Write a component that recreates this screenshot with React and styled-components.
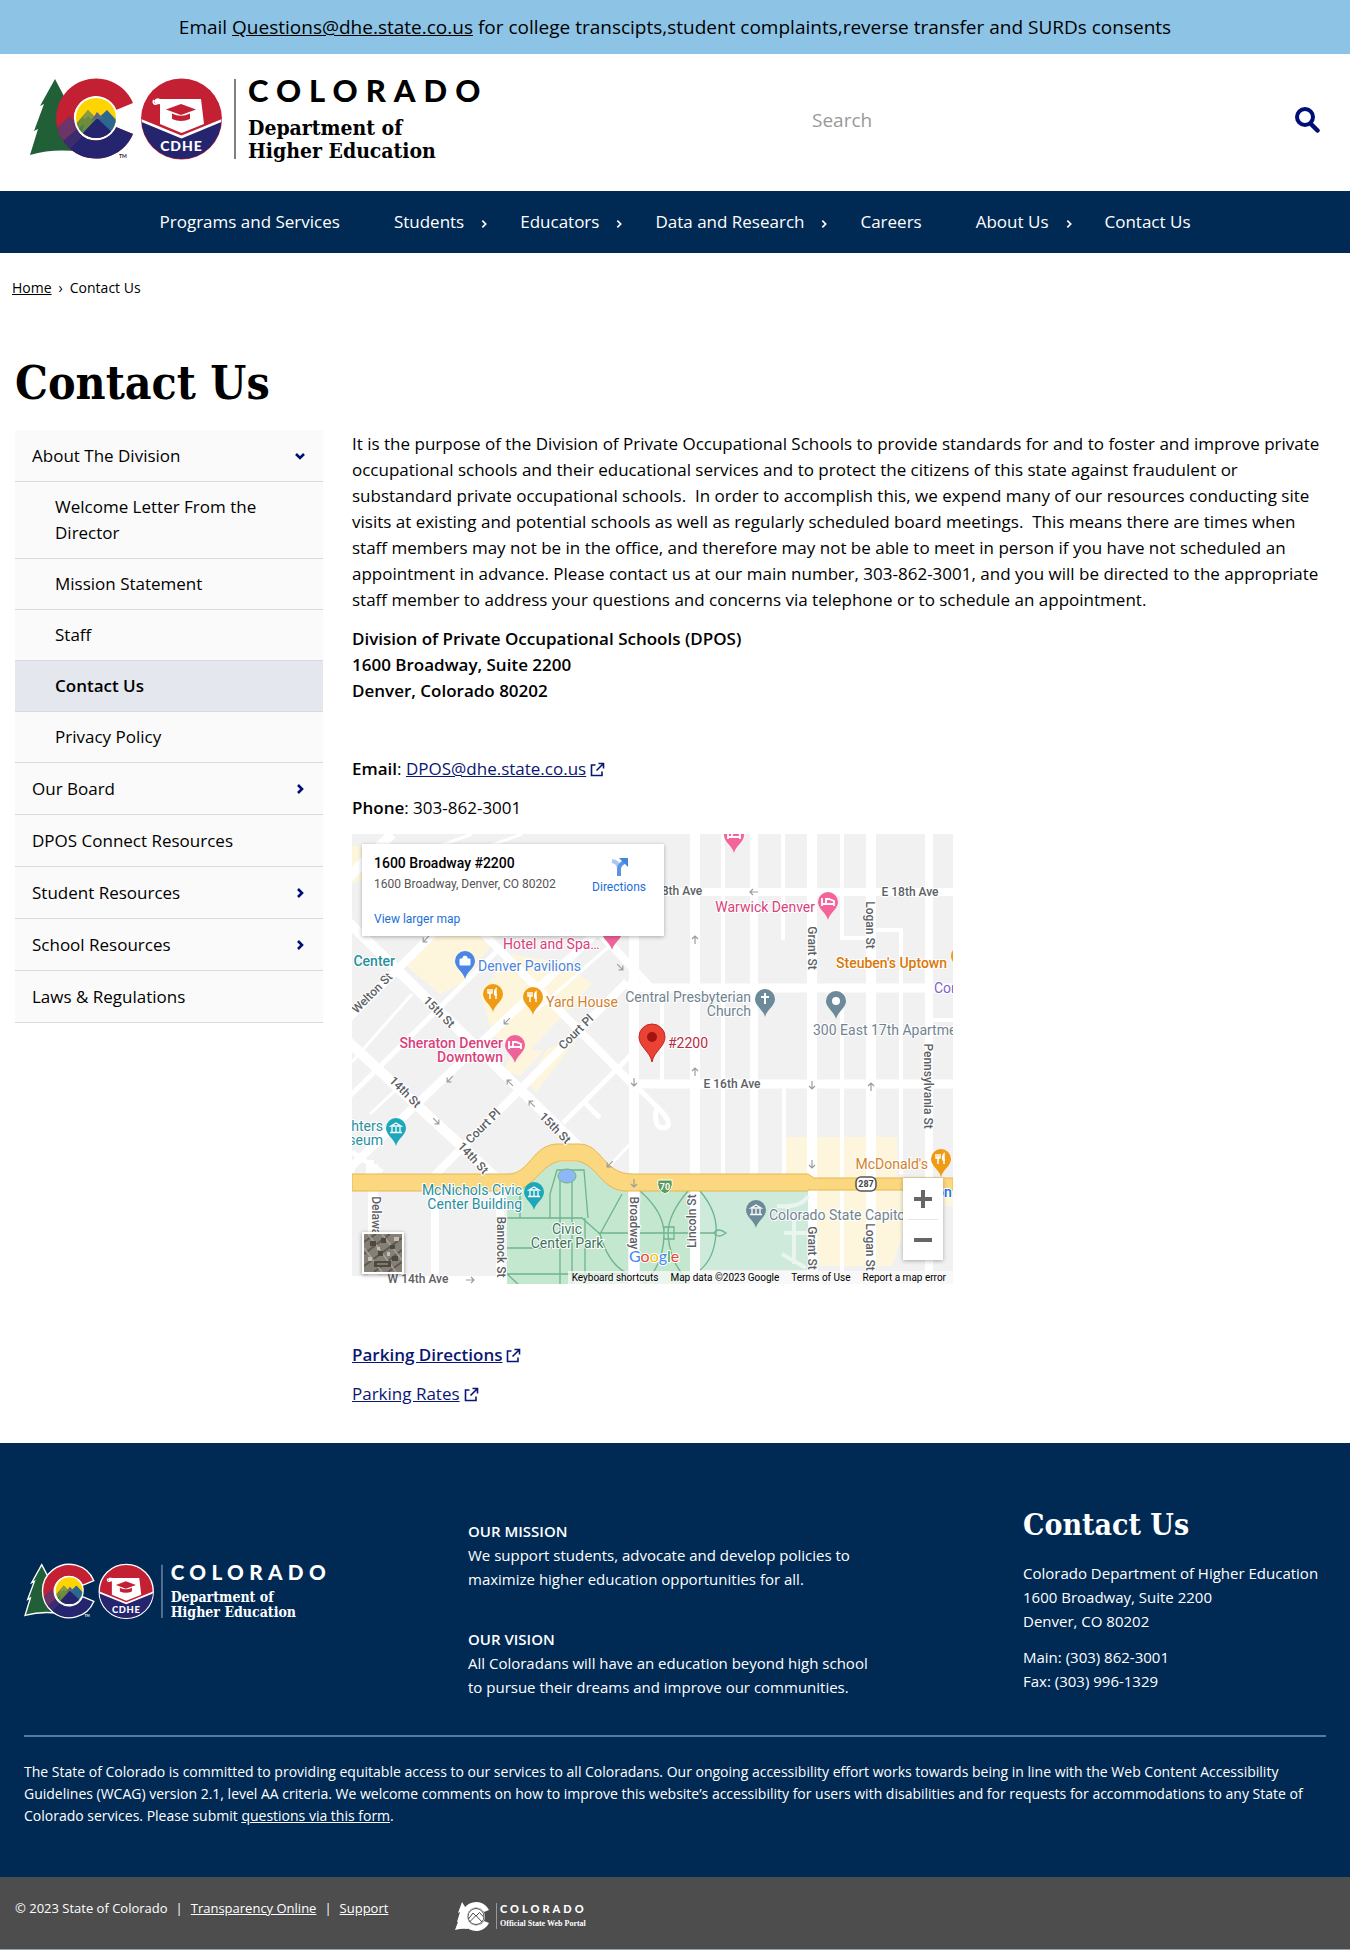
import React from "react";
import styled, { createGlobalStyle, css } from "styled-components";

const BODY = '"Open Sans", "Noto Sans", sans-serif';
const SLAB = '"DejaVu Serif Condensed", "DejaVu Serif", serif';
const NAVY = "#002a54";

const Global = createGlobalStyle`
  * { box-sizing: border-box; }
  body { margin: 0; background: #fff; color: #000; font-family: ${BODY}; font-size: 15px; line-height: 26px; }
  a { color: inherit; }
  p { margin: 0; }
  b { font-weight: 600; }
`;

/* ---------- header ---------- */
const Banner = styled.div`
  background: #8dc4e6;
  padding: 14px 16px;
  text-align: center;
  font-size: 19px;
`;
const Header = styled.header`
  display: grid;
  grid-template-columns: 1fr 1fr;
  align-items: start;
  padding: 24px 30px 27px;
`;
const SearchForm = styled.form`
  display: flex;
  align-items: center;
  padding-top: 18px;
  margin-left: 137px;
`;
const SearchInput = styled.input`
  flex: 1;
  min-width: 0;
  height: 48px;
  padding: 0;
  border: 0;
  background: none;
  font: 19px ${BODY};
  color: #000;
  &::placeholder { color: #999; opacity: 1; }
`;
const IconButton = styled.button`
  display: flex;
  padding: 0;
  border: 0;
  background: none;
  color: #000e78;
  cursor: pointer;
`;
const Nav = styled.nav`
  background: ${NAVY};
  color: #fff;
`;
const NavList = styled.ul`
  display: flex;
  justify-content: center;
  margin: 0;
  padding: 0;
  list-style: none;
`;
const NavItem = styled.li`
  display: flex;
  align-items: center;
  height: 62px;
  padding: 0 ${(p) => (p.$menu ? 4 : 27)}px 0 27px;
`;
const NavLink = styled.a`
  font-size: 17px;
  text-decoration: none;
  white-space: nowrap;
`;
const NavToggle = styled(IconButton)`
  color: #fff;
  padding: 4px 0 0 15px;
`;
const Crumbs = styled.nav`
  display: flex;
  gap: 7px;
  padding: 22px 12px 0;
  font-size: 14px;
`;

/* ---------- main ---------- */
const Title = styled.h1`
  margin: 54px 0 0;
  padding: 0 15px;
  font: bold 46px/56px ${SLAB};
`;
const Columns = styled.div`
  display: grid;
  grid-template-columns: 308px minmax(0, 1fr);
  gap: 29px;
  padding: 19px 24px 36px 15px;
`;
const SideList = styled.ul`
  margin: 0;
  padding: 0;
  list-style: none;
`;
const SideItem = styled.li`
  display: flex;
  justify-content: space-between;
  align-items: center;
  padding: 13px 17px 12px ${(p) => (p.$child ? 40 : 17)}px;
  border-bottom: 1px solid #d9dadb;
  background: #fafafa;
  ${(p) => p.$child && css`padding-top: 12px;`}
  ${(p) => p.$active && css`background: #e4e7ee; font-weight: 600;`}
`;
const SideLink = styled.a`
  font-size: 17px;
  text-decoration: none;
`;
const Article = styled.main`
  display: flex;
  flex-direction: column;
  align-items: flex-start;
  gap: 13px;
  padding-top: 1px;
`;
const Para = styled.p`
  min-height: 26px;
  font-size: 17px;
`;
const ExtLink = styled.a`
  color: #0a1673;
  font-weight: ${(p) => (p.$bold ? 600 : 400)};
  svg { margin-left: 4px; vertical-align: -2px; }
`;

/* ---------- map ---------- */
const MapFrame = styled.section`
  position: relative;
  width: 601px;
  max-width: 100%;
  height: 450px;
  margin-bottom: 6px;
  overflow: hidden;
  font-family: Roboto, sans-serif;
  > svg { display: block; }
`;
const MapCard = styled.div`
  position: absolute;
  left: 10px;
  top: 10px;
  width: 302px;
  height: 92px;
  display: flex;
  justify-content: space-between;
  padding: 8px 18px 0 12px;
  background: #fff;
  box-shadow: 0 1px 4px rgba(0, 0, 0, 0.3);
  font-size: 12px;
  line-height: 20px;
  a { color: #1a6fd6; text-decoration: none; }
`;
const CardTitle = styled.div`
  font-size: 14px;
  font-weight: 500;
  line-height: 22px;
`;
const CardAddress = styled.div`
  margin-bottom: 15px;
  color: #555;
`;
const Directions = styled.a`
  display: flex;
  flex-direction: column;
  align-items: center;
  height: 48px;
  padding-top: 5px;
`;
const ZoomBox = styled.div`
  position: absolute;
  right: 10px;
  bottom: 24px;
  width: 40px;
  display: flex;
  flex-direction: column;
  padding: 0 5px;
  background: #fff;
  box-shadow: 0 1px 4px rgba(0, 0, 0, 0.3);
`;
const ZoomButton = styled.button`
  display: flex;
  align-items: center;
  justify-content: center;
  height: 41px;
  padding: 0;
  border: 0;
  background: none;
  & + & { border-top: 1px solid #e6e6e6; }
`;
const Thumb = styled.button`
  position: absolute;
  left: 10px;
  bottom: 10px;
  padding: 2px;
  border: 0;
  display: flex;
  background: #fff;
  box-shadow: 0 1px 4px rgba(0, 0, 0, 0.4);
`;
const Attribution = styled.div`
  position: absolute;
  right: 0;
  bottom: 0;
  display: flex;
  gap: 12px;
  padding: 0 7px 0 4px;
  background: rgba(248, 250, 248, 0.75);
  font-size: 10px;
  line-height: 13px;
  a { text-decoration: none; }
`;

/* ---------- footer ---------- */
const Footer = styled.footer`
  background: ${NAVY};
  color: #fff;
  padding: 62px 24px 50px;
`;
const FooterTop = styled.div`
  display: grid;
  grid-template-columns: 444px minmax(0, 1fr) 303px;
  padding-bottom: 36px;
  border-bottom: 2px solid #5a7ba0;
  line-height: 24px;
`;
const FooterLogo = styled.div`
  padding: 59px 0 0 1px;
`;
const Mission = styled.div`
  display: flex;
  flex-direction: column;
  gap: 36px;
  padding-top: 14px;
`;
const Contact = styled.address`
  display: flex;
  flex-direction: column;
  gap: 12px;
  font-style: normal;
  white-space: nowrap;
`;
const FooterHeading = styled.h2`
  margin: 0 0 4px;
  font: bold 30px/40px ${SLAB};
`;
const Legal = styled.p`
  padding-top: 24px;
  font-size: 14px;
  line-height: 22px;
`;
const BottomBar = styled.div`
  display: flex;
  align-items: flex-start;
  gap: 66px;
  height: 73px;
  padding: 18px 15px;
  background: #4d4d4d;
  border-bottom: 1px solid #8aa4b5;
  color: #fff;
  font-size: 13px;
`;
const BarLinks = styled.div`
  display: flex;
  gap: 8px;
`;
const PortalLink = styled.a`
  padding-top: 6px;
`;

/* ---------- drawings ---------- */
const LogoSvg = styled.svg`
  display: block;
  overflow: visible;
`;

const C_SHAPE = "M133 103A40 40 0 1 0 133 134L116 127A22 22 0 1 1 116 110Z";

const BrandMark = ({ light }) => {
  const edge = light ? "#fff" : "none";
  const id = light ? "mark-light" : "mark-dark";
  return (
    <g>
      <defs>
        <clipPath id={`${id}-c`}><path d={C_SHAPE} /></clipPath>
        <clipPath id={`${id}-sun`}><circle cx="96" cy="118" r="20" /></clipPath>
        <clipPath id={`${id}-cap`}><circle cx="181.5" cy="119" r="40" /></clipPath>
      </defs>
      <path
        d="M55 79L66 100L62 99L78 125L80 152Q55 148 30 155L38 129L34 131L44 104L40 106Z"
        fill="#215f36" stroke={edge} strokeWidth="2"
      />
      <path d={C_SHAPE} fill="#c42034" />
      <g clipPath={`url(#${id}-c)`}>
        <path d="M54 142L76 118L96 140L120 116L136 116V162H70Z" fill="#25256f" />
        <path d="M52 132L70 116L84 134L66 152Z" fill="#6c3468" />
        <path d="M62 142L78 128L84 134L68 150Z" fill="#3b2c6e" />
      </g>
      {light && <path d={C_SHAPE} fill="none" stroke="#fff" strokeWidth="2" />}
      <circle cx="96" cy="118" r="22" fill="#fff" />
      <g clipPath={`url(#${id}-sun)`}>
        <rect x="74" y="96" width="44" height="44" fill="#ffd400" />
        <path d="M74 126L88 110L104 126V140H74Z" fill="#6f8b3c" />
        <path d="M92 124L107 110L120 124V140H92Z" fill="#2c6791" />
        <path d="M82 117L88 110L94 117L91 119L88 116L85 119Z" fill="#8a9a45" />
        <path d="M74 140L80 136L97 118L118 138V142Z" fill="#25256f" />
        <path d="M74 132L84 124L80 140Z" fill="#40804a" />
        <path d="M97 112L104 119L97 118L91 121Z" fill="#57658c" />
      </g>
      <circle cx="181.5" cy="119" r="40.5" fill="#c42034" stroke={edge} strokeWidth="2" />
      <g clipPath={`url(#${id}-cap)`}>
        <path d="M140 120L181.5 137L223 120V162H140Z" fill="#25256f" stroke="#fff" strokeWidth="2.6" />
      </g>
      <path d="M160 99H201L204 124L181.5 133L160 124V104Q155 105 154 101Q156 97 160 99Z" fill="#fff" />
      <path d="M154 100a2.400 2.400 0 1 0 4 2" fill="none" stroke="#fff" strokeWidth="1.600" />
      <path d="M166 109.500L181 104L196 109.500L181 115Z" fill="#c42034" />
      <path d="M172 113.500Q181 118 190 113.500V119Q181 123 172 119Z" fill="#c42034" />
      <text x="181.500" y="151" textAnchor="middle" fontFamily="Lato" fontWeight="900" fontSize="14" letterSpacing="1" fill="#fff">CDHE</text>
      <text x="119" y="158" fontFamily="Lato" fontWeight="700" fontSize="5" fill={light ? "#fff" : "#222"}>TM</text>
    </g>
  );
};

const BrandLogo = ({ width, light }) => {
  const ink = light ? "#fff" : "#000";
  return (
    <LogoSvg width={width} viewBox="30 78 455 86" role="img" aria-label="Colorado Department of Higher Education">
      <BrandMark light={light} />
      <path d="M235 79V159" stroke={light ? "#9fb0c4" : "#555"} strokeWidth="1.500" />
      <text x="248" y="102" fontFamily="Lato" fontWeight="900" fontSize="31" letterSpacing="8" fill={ink}>COLORADO</text>
      <g fontFamily="DejaVu Serif Condensed, DejaVu Serif" fontWeight="700" fontSize="21" fill={ink}>
        <text x="248" y="135">Department of</text>
        <text x="248" y="158">Higher Education</text>
      </g>
    </LogoSvg>
  );
};

const PortalLogo = () => (
  <LogoSvg width="138" height="32" viewBox="0 0 138 32" role="img" aria-label="Colorado Official State Web Portal">
    <path d="M8 1L13 9L14 28Q8 27 1 29L4 21L3 21L6 11L4 12Z" fill="#fff" />
    <path d="M35 9A14.500 14.500 0 1 0 35 22L30 20A9 9 0 1 1 30 11Z" fill="#fff" />
    <circle cx="22" cy="15.500" r="9" fill="#fff" />
    <circle cx="22" cy="15.500" r="8" fill="none" stroke="#4d4d4d" />
    <path d="M14.500 18L19 12L22 15L25.500 11.500L29.500 16M15.500 21L22 14.500L28 21" fill="none" stroke="#4d4d4d" />
    <path d="M42.500 2V28" stroke="#999" />
    <text x="46" y="12" fontFamily="Lato" fontWeight="900" fontSize="11" letterSpacing="3" fill="#fff">COLORADO</text>
    <text x="46" y="25" fontFamily="Liberation Serif" fontWeight="700" fontSize="8" fill="#fff">Official State Web Portal</text>
  </LogoSvg>
);

const Chevron = ({ down, size = 12, weight = 2 }) => (
  <svg width={size} height={size} viewBox="0 0 12 12" fill="none" stroke="currentColor" strokeWidth={weight}>
    <path d={down ? "M2 4L6 8L10 4" : "M4 2L8 6L4 10"} />
  </svg>
);

const ExternalIcon = () => (
  <svg width="15" height="15" viewBox="0 0 15 15" fill="none" stroke="#0a1673" strokeWidth="1.600">
    <path d="M5.500 3H1.500V13.500H12V9.500M8.500 1.500H13.500V6.500M13 2L6.500 8.500" />
  </svg>
);

const PIN = "M0 18C-1.500 11 -10 7 -10 0A10 10 0 1 1 10 0C10 7 1.500 11 0 18Z";
const GLYPHS = {
  bed: <path d="M-6 -4V4M-6 2H6V-1L1 -3H-2V2M6 2V4" fill="none" stroke="#fff" strokeWidth="1.800" />,
  food: <path d="M-3 -5V5M-5 -5V-1H-1V-5M3 5V-5Q1 -3 2 1H4" fill="none" stroke="#fff" strokeWidth="1.500" />,
  bag: <path d="M-5 -2H5V4H-5ZM-2 -2V-4Q0 -6 2 -4V-2" fill="#fff" stroke="#fff" />,
  cross: <path d="M0 -6V5M-4 -2H4" stroke="#fff" strokeWidth="2" />,
  dot: <circle r="4" fill="#fff" />,
  hall: <path d="M-5 -2L0 -5L5 -2ZM-4 -1V4M0 -1V4M4 -1V4M-6 4.500H6" fill="none" stroke="#fff" strokeWidth="1.300" />,
};
const PINS = [
  [260, 98, "#f0639a", "bed"], [382, 1, "#f4639a", "bed"], [476, 68, "#f4639a", "bed"],
  [163, 211, "#f0639a", "bed"], [113, 127, "#4a86e8", "bag"], [141, 160, "#ef9b13", "food"],
  [181, 163, "#ef9b13", "food"], [589, 325, "#ef9b13", "food"], [609, 122, "#ef9b13", "dot"],
  [413, 165, "#6c8a99", "cross"], [484, 167, "#6c8a99", "dot"], [404, 376, "#6c8a99", "hall"],
  [44, 294, "#1ca7bb", "hall"], [182, 358, "#1ca7bb", "hall"],
];
const PINK = "#d9417c", TEAL = "#28909e", SLATE = "#71838f", ORANGE = "#d3822c";
const PLACES = [
  [43, 132, "Center", TEAL, "end", 500], [151, 115, "Hotel and Spa…", PINK],
  [126, 137, "Denver Pavilions", "#4d86d9"], [194, 173, "Yard House", ORANGE],
  [399, 168, "Central Presbyterian", SLATE, "end"], [399, 182, "Church", SLATE, "end"],
  [151, 214, "Sheraton Denver", PINK, "end", 500], [151, 228, "Downtown", PINK, "end", 500],
  [316, 214, "#2200", "#b92a44"], [463, 78, "Warwick Denver", PINK, "end"],
  [484, 134, "Steuben's Uptown", "#d97706", "start", 500], [582, 159, "Cor", "#7a5fd0"],
  [461, 201, "300 East 17th Apartment", SLATE], [31, 297, "hters", TEAL, "end"],
  [31, 311, "seum", TEAL, "end"], [170, 361, "McNichols Civic", TEAL, "end"],
  [170, 375, "Center Building", TEAL, "end"], [215, 400, "Civic", "#3d7459", "middle"],
  [215, 414, "Center Park", "#3d7459", "middle"], [417, 386, "Colorado State Capitol", SLATE],
  [576, 335, "McDonald's", ORANGE, "end"], [584, 363, "on", "#1a73e8", "start", 500],
];
const STREETS = [
  [330, 57, 0, "8th Ave"], [558, 58, 0, "E 18th Ave"], [380, 250, 0, "E 16th Ave"],
  [66, 445, 0, "W 14th Ave"], [460, 114, 90, "Grant St"], [518, 91, 90, "Logan St"],
  [576, 252, 90, "Pennsylvania St"], [460, 414, 90, "Grant St"], [518, 413, 90, "Logan St"],
  [282, 389, 90, "Broadway"], [340, 387, -90, "Lincoln St"], [149, 413, 90, "Bannock St"],
  [24, 387, 90, "Delaware"], [53, 258, 45, "14th St"], [121, 324, 47, "14th St"],
  [203, 294, 45, "15th St"], [87, 178, 45, "15th St"], [131, 292, -45, "Court Pl"],
  [224, 198, -45, "Court Pl"], [20, 159, -45, "Welton St"],
];
const ARROWS = [
  [402, 58, 180], [343, 106, -90], [343, 238, -90], [282, 248, 90], [460, 251, 90],
  [519, 253, -90], [460, 330, 90], [98, 245, 135], [84, 287, 45], [158, 249, -135],
  [180, 270, -135], [155, 187, 135], [118, 446, 0], [282, 349, 90], [258, 330, 135],
  [74, 105, 135], [268, 133, 45],
];

const MapDrawing = () => (
  <svg width="601" height="450" viewBox="0 0 601 450" role="img" aria-label="Street map of central Denver">
    <rect width="601" height="450" fill="#f1f1f2" />
    <g fill="#fdf6dc">
      <path d="M70 108L90 96H150L112 148L88 160L50 128Z" />
      <path d="M128 158L160 120L215 130L240 150L170 225L140 200Z" />
      <path d="M163 216L192 216L168 242L152 236Z" />
      <path d="M195 215L225 205L184 258L176 248Z" />
      <path d="M0 12H75L0 50Z" />
      <path d="M433 303H545V345H433Z" />
      <path d="M464 356H601V372H551V400L540 432H464Z" />
    </g>
    <g stroke="#fff" fill="none">
      <path strokeWidth="10" d="M343 0V450M460 0V450M519 0V450M282 90V450M21 330V450" />
      <path strokeWidth="8" d="M402 0V345M577 0V450M83 350V440M148 350V450M310 58H601M0 446H160" />
      <path strokeWidth="9" d="M275 150Q285 154 300 154H601M280 250H601" />
      <path strokeWidth="4" d="M371 0V345M431 0V106M432 250V345M490 0V104H516M490 154V345M519 96H549V340M490 356V450M371 154V345M577 186H601M310 154V250" />
      <path strokeWidth="10" d="M-10 82L228 314M-12 200L145 345M40 0L-10 50" />
      <path strokeWidth="8" d="M-5 186L95 86M-5 348L0 332L245 98M80 344L275 148M120 88L282 252M235 85L300 155M18 326V345" />
      <path strokeWidth="5" d="M-2 262L150 112M211 289L282 218M0 318L30 338M282 250L310 278Q322 292 312 294Q300 294 305 272M232 268L248 284" />
      <path strokeWidth="3" d="M0 228L60 160M18 280L48 252M250 340L282 306M180 180L262 108M60 22L120 0M100 26L170 0" />
    </g>
    <path d="M155 357L200 328H232L272 357H276V450H155Z" fill="#c3e7cf" />
    <path d="M288 357H338V450H288Z" fill="#c3e7cf" />
    <path d="M348 357H456V436H348Z" fill="#cdeadb" />
    <g stroke="#6fb48d" strokeWidth="1.300" fill="none">
      <path d="M155 384H230L248 400L270 360M155 414H200M233 384V440M198 384V360L205 336H232L236 384M208 346V450M220 346V450M168 384V358M248 400Q256 430 276 440M246 399H276M155 440L166 450M155 440H276" />
      <path d="M288 357Q312 378 312 400Q312 430 292 450M336 357Q316 380 316 400Q318 430 336 446M288 399H338M348 357Q366 378 364 400Q362 425 348 436M312 393H322V405H312ZM348 399H362Q366 393 374 399Q366 405 362 399" />
    </g>
    <path d="M425 372Q450 374 456 362M442 380V430M430 420L454 434M432 399H456" stroke="#e9f5ee" strokeWidth="4" fill="none" />
    <path d="M0 340H156C178 340 180 311 205 310H228C250 311 252 340 280 340H456L462 344H601V356H456V357H274C250 357 245 330 225 327H208C188 330 182 357 158 357H0Z" fill="#fbd77f" stroke="#e6b84e" />
    <ellipse cx="215" cy="342" rx="9" ry="7" fill="#8db8f5" stroke="#6fb48d" />
    <g fill="none" stroke="#9a9da0" strokeWidth="1.200">
      {ARROWS.map(([x, y, r]) => (
        <path key={`${x}-${y}`} d="M-4 0H4M1 -3L4 0L1 3" transform={`translate(${x} ${y}) rotate(${r})`} />
      ))}
    </g>
    <g fontFamily="Roboto" fontSize="12" fontWeight="500" fill="#5c6064" textAnchor="middle" stroke="#fff" strokeWidth="2" paintOrder="stroke">
      {STREETS.map(([x, y, r, label]) => (
        <text key={`${x}-${y}`} transform={`translate(${x} ${y}) rotate(${r})`} y="4">{label}</text>
      ))}
    </g>
    <g fontFamily="Roboto" fontSize="14" stroke="#fff" strokeWidth="2" paintOrder="stroke">
      {PLACES.map(([x, y, label, color, anchor = "start", weight = 400]) => (
        <text key={`${x}-${y}`} x={x} y={y} fill={color} textAnchor={anchor} fontWeight={weight}>{label}</text>
      ))}
    </g>
    {PINS.map(([x, y, color, glyph]) => (
      <g key={`${x}-${y}`} transform={`translate(${x} ${y})`}>
        <path d={PIN} fill={color} />
        {GLYPHS[glyph]}
      </g>
    ))}
    <g transform="translate(300 203)">
      <path d="M0 25C-2 14 -13 10 -13 0A13 13 0 1 1 13 0C13 10 2 14 0 25Z" fill="#ea4335" stroke="#c5221f" />
      <circle r="5" fill="#a3140f" />
    </g>
    <rect x="504" y="343" width="20" height="14" rx="5" fill="#fff" stroke="#555" strokeWidth="1.500" />
    <path d="M306 346H320Q322 356 313 360Q304 356 306 346Z" fill="#5a9a5c" stroke="#fff" />
    <g fontFamily="Roboto" fontSize="9" fontWeight="700" textAnchor="middle">
      <text x="514" y="353" fill="#444">287</text>
      <text x="313" y="356" fill="#fff">70</text>
    </g>
    <text x="277" y="428" fontFamily="Lato" fontSize="16" stroke="#fff" strokeWidth="2" paintOrder="stroke">
      <tspan fill="#4285f4">G</tspan><tspan fill="#ea4335">o</tspan><tspan fill="#fbbc04">o</tspan><tspan fill="#4285f4">g</tspan><tspan fill="#34a853">l</tspan><tspan fill="#ea4335">e</tspan>
    </text>
  </svg>
);

const SatelliteThumb = () => (
  <svg width="38" height="38" viewBox="0 0 38 38" aria-hidden="true">
    <rect width="38" height="38" fill="#857f76" />
    <path d="M0 8L12 0M0 20L26 0M0 32L38 4M10 38L38 16M24 38L38 28" stroke="#5f5a54" strokeWidth="2" />
    <path d="M4 0L32 38M18 0L38 26M0 14L18 38" stroke="#a8a196" strokeWidth="1.500" />
    <path d="M6 7H12V12H6ZM17 4H22V9H17ZM26 11H31V15H26ZM10 27H27V33H10ZM14 17H19V22H14ZM28 22H34V27H28Z" fill="#4c4843" />
    <path d="M13 13H16V16H13ZM23 18H26V22H23ZM4 23H8V27H4ZM30 3H35V7H30Z" fill="#c4bdb0" />
    <path d="M13 29H24V31H13Z" fill="#75805e" />
  </svg>
);

/* ---------- data ---------- */
const NAV = [
  ["Programs and Services"], ["Students", true], ["Educators", true], ["Data and Research", true],
  ["Careers"], ["About Us", true], ["Contact Us"],
];
const SIDE = [
  { label: "About The Division", icon: "down" },
  { label: "Welcome Letter From the Director", child: true },
  { label: "Mission Statement", child: true },
  { label: "Staff", child: true },
  { label: "Contact Us", child: true, active: true },
  { label: "Privacy Policy", child: true },
  { label: "Our Board", icon: "right" },
  { label: "DPOS Connect Resources" },
  { label: "Student Resources", icon: "right" },
  { label: "School Resources", icon: "right" },
  { label: "Laws & Regulations" },
];

export default function App() {
  return (
    <>
      <Global />
      <Banner>
        Email <a href="#email">Questions@dhe.state.co.us</a> for college transcipts,student complaints,reverse transfer and SURDs consents
      </Banner>
      <Header>
        <BrandLogo width={455} />
        <SearchForm role="search">
          <SearchInput type="search" placeholder="Search" aria-label="Search" />
          <IconButton type="button" aria-label="Submit search">
            <svg width="25" height="26" viewBox="0 0 25 26" fill="none" stroke="currentColor" strokeLinecap="round">
              <circle cx="10" cy="10" r="8" strokeWidth="4" />
              <path d="M16 17L22.500 23.500" strokeWidth="4.500" />
            </svg>
          </IconButton>
        </SearchForm>
      </Header>
      <Nav aria-label="Main">
        <NavList>
          {NAV.map(([label, menu]) => (
            <NavItem key={label} $menu={menu}>
              <NavLink href="#nav">{label}</NavLink>
              {menu && <NavToggle type="button" aria-label={`${label} menu`}><Chevron size={10} weight={2} /></NavToggle>}
            </NavItem>
          ))}
        </NavList>
      </Nav>
      <Crumbs aria-label="Breadcrumb">
        <a href="#home">Home</a><span>›</span><span>Contact Us</span>
      </Crumbs>
      <Title>Contact Us</Title>
      <Columns>
        <SideList>
          {SIDE.map((item) => (
            <SideItem key={item.label} $child={item.child} $active={item.active}>
              <SideLink href="#section">{item.label}</SideLink>
              {item.icon && (
                <IconButton type="button" aria-label={`Toggle ${item.label}`}>
                  <Chevron down={item.icon === "down"} weight={2.6} />
                </IconButton>
              )}
            </SideItem>
          ))}
        </SideList>
        <Article>
          <Para>
            It is the purpose of the Division of Private Occupational Schools to provide standards for and to foster and improve private occupational schools and their educational services and to protect the citizens of this state against fraudulent or substandard private occupational schools.&nbsp; In order to accomplish this, we expend many of our resources conducting site visits at existing and potential schools as well as regularly scheduled board meetings.&nbsp; This means there are times when staff members may not be in the office, and therefore may not be able to meet in person if you have not scheduled an appointment in advance. Please contact us at our main number, 303-862-3001, and you will be directed to the appropriate staff member to address your questions and concerns via telephone or to schedule an appointment.
          </Para>
          <Para>
            <b>Division of Private Occupational Schools (DPOS)<br />1600 Broadway, Suite 2200<br />Denver, Colorado 80202</b>
          </Para>
          <Para />
          <Para><b>Email</b>: <ExtLink href="#dpos">DPOS@dhe.state.co.us<ExternalIcon /></ExtLink></Para>
          <Para><b>Phone</b>: 303-862-3001</Para>
          <MapFrame aria-label="Map">
            <MapDrawing />
            <MapCard>
              <div>
                <CardTitle>1600 Broadway #2200</CardTitle>
                <CardAddress>1600 Broadway, Denver, CO 80202</CardAddress>
                <a href="#map">View larger map</a>
              </div>
              <Directions href="#directions">
                <svg width="18" height="20" viewBox="0 0 18 20" fill="none">
                  <path d="M2 4Q9 5 9 12V19" stroke="#a9c9f5" strokeWidth="4" />
                  <path d="M9 19V12Q9 8 14 5" stroke="#5b94e3" strokeWidth="4" />
                  <path d="M9 1H18V10Z" fill="#4285dc" />
                </svg>
                Directions
              </Directions>
            </MapCard>
            <Thumb type="button" aria-label="Show satellite imagery"><SatelliteThumb /></Thumb>
            <ZoomBox>
              <ZoomButton type="button" aria-label="Zoom in">
                <svg width="18" height="18"><path d="M0 9H18M9 0V18" stroke="#666" strokeWidth="4" /></svg>
              </ZoomButton>
              <ZoomButton type="button" aria-label="Zoom out">
                <svg width="18" height="18"><path d="M0 9H18" stroke="#666" strokeWidth="4" /></svg>
              </ZoomButton>
            </ZoomBox>
            <Attribution>
              <a href="#keys">Keyboard shortcuts</a>
              <span>Map data ©2023 Google</span>
              <a href="#terms">Terms of Use</a>
              <a href="#report">Report a map error</a>
            </Attribution>
          </MapFrame>
          <Para />
          <Para><ExtLink href="#parking" $bold>Parking Directions<ExternalIcon /></ExtLink></Para>
          <Para><ExtLink href="#rates">Parking Rates<ExternalIcon /></ExtLink></Para>
        </Article>
      </Columns>
      <Footer>
        <FooterTop>
          <FooterLogo><BrandLogo width={304} light /></FooterLogo>
          <Mission>
            <p><b>OUR MISSION</b><br />We support students, advocate and develop policies to<br />maximize higher education opportunities for all.</p>
            <p><b>OUR VISION</b><br />All Coloradans will have an education beyond high school<br />to pursue their dreams and improve our communities.</p>
          </Mission>
          <Contact>
            <FooterHeading>Contact Us</FooterHeading>
            <p>Colorado Department of Higher Education<br />1600 Broadway, Suite 2200<br />Denver, CO 80202</p>
            <p>Main: (303) 862-3001<br />Fax: (303) 996-1329</p>
          </Contact>
        </FooterTop>
        <Legal>
          The State of Colorado is committed to providing equitable access to our services to all Coloradans. Our ongoing accessibility effort works towards being in line with the Web Content Accessibility Guidelines (WCAG) version 2.1, level AA criteria. We welcome comments on how to improve this website’s accessibility for users with disabilities and for requests for accommodations to any State of Colorado services. Please submit <a href="#form">questions via this form</a>.
        </Legal>
      </Footer>
      <BottomBar>
        <BarLinks>
          <span>© 2023 State of Colorado</span><span>|</span><a href="#transparency">Transparency Online</a><span>|</span><a href="#support">Support</a>
        </BarLinks>
        <PortalLink href="#portal"><PortalLogo /></PortalLink>
      </BottomBar>
    </>
  );
}
